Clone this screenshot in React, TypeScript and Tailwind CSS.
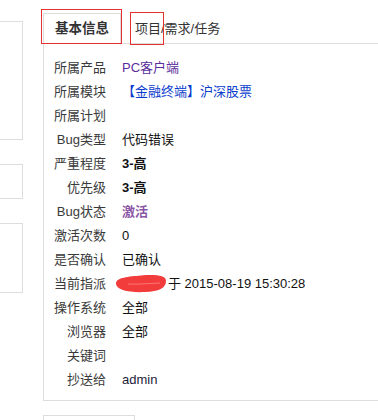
import React from "react";

type Row = {
  label: string;
  value: React.ReactNode;
};

const rows: Row[] = [
  { label: "所属产品", value: <span className="text-[#5b2d9b]">PC客户端</span> },
  { label: "所属模块", value: <span className="text-[#0a3ccc]">【金融终端】沪深股票</span> },
  { label: "所属计划", value: null },
  { label: "Bug类型", value: <span>代码错误</span> },
  { label: "严重程度", value: <span className="font-bold">3-高</span> },
  { label: "优先级", value: <span className="font-bold">3-高</span> },
  { label: "Bug状态", value: <span className="font-bold text-[#8b55a6]">激活</span> },
  { label: "激活次数", value: <span>0</span> },
  { label: "是否确认", value: <span>已确认</span> },
  {
    label: "当前指派",
    value: (
      <span className="flex items-center">
        <svg width="52" height="19" viewBox="0 0 52 19" className="-ml-[7px] mr-[1px] shrink-0">
          <path
            d="M1,9.5 C1,3.5 14,2.5 26,1.5 C40,0.5 51,1 51,7 C51,14 44,17.5 30,18 C14,18.8 1,16 1,9.5 Z"
            fill="#f23b3b"
          />
          <path d="M13,10 C22,10.5 34,9.5 45,9" stroke="#ff8585" strokeWidth="0.8" fill="none" />
        </svg>
        于 2015-08-19 15:30:28
      </span>
    ),
  },
  { label: "操作系统", value: <span>全部</span> },
  { label: "浏览器", value: <span>全部</span> },
  { label: "关键词", value: null },
  { label: "抄送给", value: <span className="text-[#1c1c3a]">admin</span> },
];

function InfoRow({ label, value }: Row) {
  return (
    <div className="flex h-[24px] items-center">
      <div className="w-[62px] shrink-0 text-right text-[#3a3a3a]">{label}</div>
      <div className="pl-[16px] text-[#111]">{value}</div>
    </div>
  );
}

export default function App() {
  return (
    <div className="relative h-[420px] w-[378px] overflow-hidden bg-white font-['Liberation_Sans','Noto_Sans_CJK_SC',sans-serif] text-[13px] leading-none">
      <div className="flex">
        {/* left side boxes */}
        <div className="flex w-[23px] shrink-0 flex-col">
          <div className="mt-[21px] h-[119px] border-y border-r border-[#ddd]" />
          <div className="mt-[24px] h-[35px] border-y border-r border-[#ddd]" />
          <div className="mt-[24px] h-[70px] border-y border-r border-[#ddd]" />
        </div>

        {/* main panel */}
        <div className="ml-[20px] flex-1 pt-[13px]">
          <div className="flex h-[31px] border-b border-[#ddd]">
            <div className="-mb-px flex h-[31px] w-[78px] items-center justify-center border-x border-t border-[#ddd] bg-white text-[13.5px] font-bold text-[#333]">
              基本信息
            </div>
            <div className="ml-[14px] flex items-center text-[#333]">项目/需求/任务</div>
          </div>
          <div className="h-[357px] border-b border-l border-[#ddd] pt-[11px]">
            {rows.map((row, index) => (
              <InfoRow key={index} label={row.label} value={row.value} />
            ))}
          </div>
          <div className="mt-[14px] h-[20px] w-[92px] border-l border-t border-r border-[#ddd]" />
        </div>
      </div>

      {/* red annotation boxes */}
      <div className="absolute left-[41px] top-[9px] h-[35px] w-[81px] border border-[#e8302f]" />
      <div className="absolute left-[130px] top-[12px] h-[33px] w-[34px] border border-[#e8302f]" />
    </div>
  );
}
